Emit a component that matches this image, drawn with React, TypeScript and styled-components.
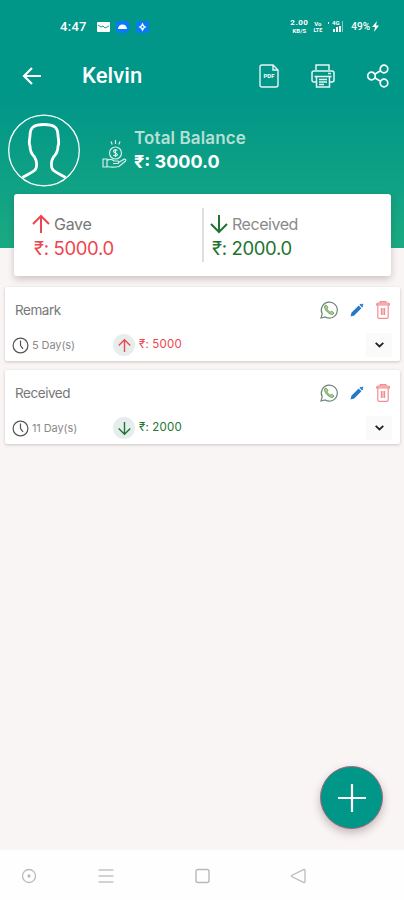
import React from "react";
import styled, { createGlobalStyle } from "styled-components";

const GlobalStyle = createGlobalStyle`
  * { box-sizing: border-box; }
  body { margin: 0; background: #f9f5f5; font-family: Inter, "Noto Sans", sans-serif; }
  svg { display: block; flex: none; overflow: visible; }
`;

const Screen = styled.main`
  width: 404px;
  height: 900px;
  display: flex;
  flex-direction: column;
  overflow: hidden;
  background: #f9f5f4;
`;

const Header = styled.header`
  flex: none;
  height: 248px;
  background: linear-gradient(#009688 0, #009688 96px, #1aaa82 248px);
  color: #fff;
`;

const StatusBar = styled.div`
  height: 53px;
  padding: 0 25px 0 60px;
  display: flex;
  align-items: center;
  justify-content: space-between;
  font-family: Roboto, sans-serif;
`;

const StatusGroup = styled.div<{ $gap: number }>`
  display: flex;
  align-items: center;
  gap: ${(p) => p.$gap}px;
`;

const Stack = styled.div`
  display: flex;
  flex-direction: column;
  align-items: center;
  font-weight: 700;
`;

const Label = styled.span<{
  $size: number;
  $color?: string;
  $weight?: number;
  $spacing?: number;
  $line?: number;
}>`
  font-size: ${(p) => p.$size}px;
  color: ${(p) => p.$color ?? "inherit"};
  font-weight: ${(p) => p.$weight ?? 400};
  letter-spacing: ${(p) => p.$spacing ?? 0}px;
  line-height: ${(p) => (p.$line ? `${p.$line}px` : "1")};
  white-space: nowrap;
`;

const AppBar = styled.div`
  height: 45px;
  padding: 0 15px 0 22px;
  display: flex;
  align-items: center;
`;

const Title = styled.h1`
  margin: 0 auto 0 40px;
  font: 500 22px/46px Roboto, sans-serif;
  letter-spacing: 0.1px;
`;

const Tools = styled.div`
  display: flex;
  align-items: center;
  gap: 32px;
`;

const Balance = styled.section`
  display: flex;
  padding: 15px 0 0 8px;
`;

const BalanceIcon = styled.div`
  margin: 27px 7px 0 22px;
`;

const BalanceText = styled.div`
  display: flex;
  flex-direction: column;
  padding-top: 14px;
`;

const Summary = styled.section`
  flex: none;
  height: 82px;
  margin: -54px 13px 0 14px;
  padding-top: 14px;
  display: grid;
  grid-template-columns: 190px 1fr;
  align-items: start;
  background: #fff;
  border-radius: 3px;
  box-shadow: 0 3px 7px rgba(60, 40, 40, 0.24);
`;

const SummaryCell = styled.div<{ $divider?: boolean }>`
  height: 54px;
  padding-left: ${(p) => (p.$divider ? 18 : 6)}px;
  border-right: ${(p) => (p.$divider ? "2px solid #dedede" : "none")};
`;

const SummaryHead = styled.div`
  height: 31px;
  display: flex;
  align-items: center;
  gap: 4px;
`;

const Amount = styled.div`
  height: 20px;
  display: flex;
  padding-left: 2px;
`;

const List = styled.section`
  flex: 1;
  padding: 11px 4px 0 5px;
  display: flex;
  flex-direction: column;
  gap: 9px;
`;

const Entry = styled.article`
  height: 74px;
  background: #fff;
  border-radius: 2px;
  box-shadow: 0 1px 3px rgba(70, 50, 50, 0.25);
`;

const EntryTop = styled.div`
  height: 46px;
  padding: 0 10px 0 10px;
  display: flex;
  align-items: center;
  justify-content: space-between;
`;

const Actions = styled.div`
  display: flex;
  align-items: center;
  gap: 12px;
`;

const EntryBottom = styled.div`
  height: 22px;
  padding: 0 8px 0 7px;
  display: grid;
  grid-template-columns: 101px 1fr 26px;
  align-items: center;
`;

const Inline = styled.div<{ $gap: number }>`
  display: flex;
  align-items: center;
  gap: ${(p) => p.$gap}px;
`;

const ArrowDisc = styled.div`
  width: 22px;
  height: 22px;
  border-radius: 50%;
  display: grid;
  place-items: center;
  background: #e6eeed;
`;

const Expand = styled.button`
  width: 26px;
  height: 24px;
  padding: 0;
  border: 0;
  background: #fafafa;
  display: grid;
  place-items: center;
`;

const Fab = styled.button`
  position: absolute;
  left: 320px;
  top: 766px;
  width: 63px;
  height: 63px;
  padding: 0;
  border: 1px solid #a7667e;
  border-radius: 50%;
  background: #009688;
  display: grid;
  place-items: center;
  box-shadow: 0 4px 8px rgba(50, 30, 30, 0.28);
`;

const NavBar = styled.nav`
  flex: none;
  height: 50px;
  background: #fefefe;
  display: flex;
  align-items: center;
  padding: 2px 0 0 21px;
`;

const NavItem = styled.div<{ $after: number }>`
  width: 16px;
  margin-right: ${(p) => p.$after}px;
`;

const RED = "#ed4650";
const GREEN = "#1e7431";

const Arrow = ({ color, size, down, width = 2 }: { color: string; size: number; down?: boolean; width?: number }) => (
  <svg width={size} height={size} viewBox="0 0 18 18" fill="none" stroke={color} strokeWidth={width}>
    <path d={down ? "M9 0v17M1 9l8 8 8-8" : "M9 18V1M1 9l8-8 8 8"} />
  </svg>
);

const WhatsApp = () => (
  <svg width="18" height="18" viewBox="0 0 18 18" fill="none">
    <path d="M1 17l1.2-4.2A8 8 0 1 1 5.2 16L1 17z" stroke="#6d8578" strokeWidth="1.2" />
    <path d="M5.3 4.3c-1.8 1.6.2 4.7 2 6.500 1.8 1.800 4.700 3.600 6.300 1.900.6-.8-1.100-2.300-2.100-2.300-.7 0-.8.9-1.400.8-.9-.3-3-2.300-3.200-3.200 0-.6.9-.7.8-1.400-.1-1-1.500-3-2.400-2.300z" fill="#b7d98c" stroke="#4f8a45" strokeWidth=".9" />
  </svg>
);

const Pencil = () => (
  <svg width="14" height="14" viewBox="0 0 14 14" fill="#2179c8">
    <path d="M.6 13.400l.8-3.600 7.300-7.200 2.700 2.700-7.200 7.300zM9.500 1.800l1.200-1.100.8.8 1-.9.9.9-.9 1 .7.7-1.100 1.200z" />
  </svg>
);

const Trash = () => (
  <svg width="14" height="18" viewBox="0 0 14 18" fill="none" stroke="#f28e94" strokeWidth="1.200">
    <path d="M.6 3.800h12.800v-1L12 2.200H2L.6 3zM4.200 2V.6h5.600V2M1.800 4v12q0 1.400 1.400 1.400h7.600q1.400 0 1.400-1.400V4M5.400 7v7M7 7v7M8.600 7v7" />
  </svg>
);

const Clock = () => (
  <svg width="17" height="17" viewBox="0 0 17 17" fill="none" stroke="#555" strokeWidth="1.200">
    <circle cx="8.500" cy="8.500" r="7.400" />
    <path d="M8.500 3.500v5l2.500 3.400" />
  </svg>
);

type EntryData = {
  title: string;
  days: string;
  amount: string;
  received?: boolean;
};

const entries: EntryData[] = [
  { title: "Remark", days: "5 Day(s)", amount: "₹: 5000" },
  { title: "Received", days: "11 Day(s)", amount: "₹: 2000", received: true },
];

const EntryCard = ({ data }: { data: EntryData }) => {
  const color = data.received ? GREEN : RED;
  return (
    <Entry>
      <EntryTop>
        <Label $size={13.5} $color="#777" $spacing={-0.45} $line={48}>{data.title}</Label>
        <Actions><WhatsApp /><Pencil /><Trash /></Actions>
      </EntryTop>
      <EntryBottom>
        <Inline $gap={3}>
          <Clock />
          <Label $size={11} $color="#8a8a8a" $spacing={-0.1}>{data.days}</Label>
        </Inline>
        <Inline $gap={4}>
          <ArrowDisc><Arrow color={color} size={13} down={data.received} width={1.9} /></ArrowDisc>
          <Label $size={11.5} $color={color} $spacing={0.2}>{data.amount}</Label>
        </Inline>
        <Expand aria-label="Expand">
          <svg width="9" height="6" viewBox="0 0 9 6" fill="none" stroke="#222" strokeWidth="1.800"><path d="M.7.9l3.800 3.600L8.300.9" /></svg>
        </Expand>
      </EntryBottom>
    </Entry>
  );
};

export default function App() {
  return (
    <Screen>
      <GlobalStyle />
      <Header>
        <StatusBar>
          <StatusGroup $gap={7}>
            <Label $size={13} $weight={500} $spacing={0.3}>4:47</Label>
            <svg width="52" height="12" viewBox="0 0 52 12">
              <rect x="3" y="1" width="13" height="10" rx="1" fill="#fff" />
              <path d="M4 4l3 2 2-1 2 2 4-2" fill="none" stroke="#009688" strokeWidth=".9" />
              <rect x="22" y="0" width="13" height="12" rx="3" fill="#0879f7" />
              <path d="M24 8a4.500 4.500 0 0 1 9 0z" fill="#fff" />
              <rect x="42" y="0" width="13" height="12" rx="3" fill="#0879f7" />
              <path d="M48.500 1.500L50 4.600 52.500 6 50 7.500l-1.500 3L47 7.500 44.500 6 47 4.600z" fill="#fff" />
              <circle cx="48.500" cy="6" r="1" fill="#0879f7" />
            </svg>
          </StatusGroup>
          <StatusGroup $gap={5}>
            <Stack>
              <Label $size={8} $weight={700} $spacing={0.5} $line={8}>2.00</Label>
              <Label $size={6} $weight={700} $line={7}>KB/S</Label>
            </Stack>
            <Stack>
              <Label $size={6} $weight={700} $line={7}>Vo</Label>
              <Label $size={5.5} $weight={700} $line={7}>LTE</Label>
            </Stack>
            <svg width="19" height="13" viewBox="0 0 19 13" fill="#fff">
              <path d="M1 2h1v2H1zM6 9h2v3H6zM9 7h2v5H9zM12 6h2v6h-2z" />
              <path d="M15 1h1v11h-1z" opacity=".5" />
              <text x="5" y="5" fontSize="6" fontWeight="700">4G</text>
            </svg>
            <Inline $gap={2}>
              <Label $size={10} $weight={500}>49%</Label>
              <svg width="7" height="11" viewBox="0 0 7 11" fill="#fff"><path d="M5 0L0 6h3l-1 5 5-6.500H4z" /></svg>
            </Inline>
          </StatusGroup>
        </StatusBar>
        <AppBar>
          <svg width="20" height="18" viewBox="0 0 20 18" fill="none" stroke="#fff" strokeWidth="2.200"><path d="M19 9H2M10 1L2 9l8 8" /></svg>
          <Title>Kelvin</Title>
          <Tools>
            <svg width="20" height="24" viewBox="0 0 20 24" fill="none" stroke="#e6f5f3" strokeWidth="1.400">
              <path d="M3 1h11l5 5v15q0 2-2 2H3q-2 0-2-2V3q0-2 2-2zM14 1v5h5" />
              <text x="10" y="14" textAnchor="middle" fontFamily="Roboto" fontSize="6" fontWeight="700" fill="#fff" stroke="none">PDF</text>
            </svg>
            <svg width="24" height="24" viewBox="0 0 24 24" fill="none" stroke="#e6f5f3" strokeWidth="1.500">
              <path d="M5 6V1h13v5M5 18H3q-2 0-2-2V9q0-2 2-2h18q2 0 2 2v7q0 2-2 2h-2M3.500 12.500h17M5.500 12.500V23h13V12.500M8 15.500h8M8 18h8M8 20.500h5M17 9.500h3" />
            </svg>
            <svg width="22" height="24" viewBox="0 0 22 24" fill="none" stroke="#fff" strokeWidth="1.700">
              <circle cx="4.500" cy="12" r="3.800" /><circle cx="17" cy="5" r="3.800" /><circle cx="17" cy="19" r="3.800" />
              <path d="M8 10l5.500-3.200M8 14l5.500 3.200" />
            </svg>
          </Tools>
        </AppBar>
        <Balance>
          <svg width="72" height="74" viewBox="0 0 72 74" fill="none" stroke="#fff">
            <circle cx="36" cy="37.500" r="35.300" strokeWidth="1.300" />
            <path d="M14.500 64.500c5-3 9-4.500 12.500-7.500 2.500-3 2-9-.5-13-3-3-4.500-6.500-4.500-11-1.500-3-.5-6 0-10 0-9 4-11.500 14-11.500S50 14 50 23c.5 4 1.500 7 0 10 0 4.500-1.500 8-4.500 11-2.500 4-3 10-.5 13 3.500 3 7.500 4.500 12.500 7.500" strokeWidth="2.800" />
          </svg>
          <BalanceIcon>
            <svg width="25" height="29" viewBox="0 0 25 29" fill="none" stroke="#d5eee8" strokeWidth="1.200">
              <circle cx="13.500" cy="13" r="6" />
              <path d="M13.500 0v4M9 1.500l1.200 3M18 1.500l-1.200 3M15.500 10.500c-2-1.500-4-.5-4 .8 0 2 4 1.300 4 3.200 0 1.500-2.600 2-4 .5M13.500 9v8" />
              <path d="M1 19h4v8H1zM5 20.500c3-2 5-1.500 7 .5h4q1.500 1 0 2.500h-5M16.500 22.500l6-3.500q2 .5 1 2L17 26.500q-6 1.200-12 0" />
            </svg>
          </BalanceIcon>
          <BalanceText>
            <Label $size={17} $weight={600} $color="#b5e0d6" $spacing={0.12} $line={23}>Total Balance</Label>
            <Label $size={18} $weight={700} $spacing={0} $line={23}>₹: 3000.0</Label>
          </BalanceText>
        </Balance>
      </Header>
      <Summary>
        <SummaryCell $divider>
          <SummaryHead><Arrow color={RED} size={18} /><Label $size={16} $color="#777" $spacing={-0.3}>Gave</Label></SummaryHead>
          <Amount><Label $size={18.5} $color={RED} $spacing={-0.35} $line={18}>₹: 5000.0</Label></Amount>
        </SummaryCell>
        <SummaryCell>
          <SummaryHead><Arrow color={GREEN} size={18} down /><Label $size={16} $color="#8a8a8a" $spacing={-0.45}>Received</Label></SummaryHead>
          <Amount><Label $size={18.5} $color={GREEN} $spacing={-0.35} $line={18}>₹: 2000.0</Label></Amount>
        </SummaryCell>
      </Summary>
      <List>
        {entries.map((e) => <EntryCard key={e.title} data={e} />)}
      </List>
      <NavBar>
        <NavItem $after={61}><svg width="16" height="16" fill="none" stroke="#bbb" strokeWidth="1.300"><circle cx="8" cy="8" r="6.500" /><circle cx="8" cy="8" r="1" fill="#999" /></svg></NavItem>
        <NavItem $after={80}><svg width="16" height="16" stroke="#c4c4c4" strokeWidth="1.300"><path d="M.5 2h15M.5 8h15M.5 14h15" /></svg></NavItem>
        <NavItem $after={80}><svg width="16" height="16" fill="none" stroke="#b8b8b8" strokeWidth="1.400"><rect x="2" y="1.500" width="13" height="13" rx="2" /></svg></NavItem>
        <NavItem $after={0}><svg width="16" height="16" fill="none" stroke="#bbb" strokeWidth="1.300"><path d="M15 2.500v11q0 1.500-1.500.8L2 8.800q-1-.8 0-1.600l11.500-5.500q1.500-.7 1.500.8z" /></svg></NavItem>
      </NavBar>
      <Fab aria-label="Add">
        <svg width="28" height="28" stroke="#fff" strokeWidth="2.200"><path d="M14 0v28M0 14h28" /></svg>
      </Fab>
    </Screen>
  );
}
